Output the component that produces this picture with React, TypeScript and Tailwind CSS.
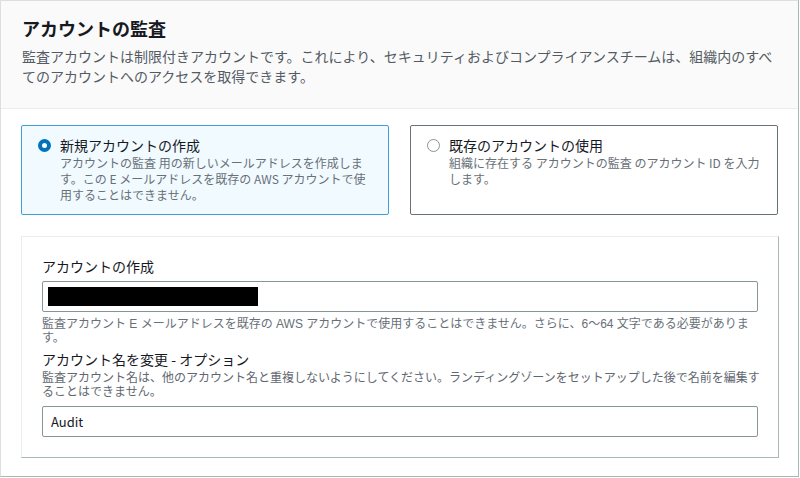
import React from "react";

const font = { fontFamily: '"Noto Sans CJK JP", "Noto Sans", sans-serif' };
const helpFont = { fontFamily: '"Liberation Sans", "Noto Sans CJK JP", sans-serif' };

function RadioCard({
  selected,
  title,
  lines,
}: {
  selected: boolean;
  title: string;
  lines: string[];
}) {
  return (
    <div
      className={
        selected
          ? "w-[368px] h-[90px] border border-[#3f9fd6] bg-[#f1faff] rounded-[2px] pt-[9px] pl-[16px] flex"
          : "w-[368px] h-[90px] border border-[#687078] bg-white rounded-[2px] pt-[9px] pl-[16px] flex"
      }
    >
      <div className="h-[20px] flex items-center">
        {selected ? (
          <span className="block w-[13px] h-[13px] rounded-full border-[4px] border-[#0073bb] bg-white" />
        ) : (
          <span className="block w-[13px] h-[13px] rounded-full border-[1.5px] border-[#879596] bg-white" />
        )}
      </div>
      <div className="ml-[9px]">
        <div className="text-[14px] leading-[20px] text-[#16191f]">{title}</div>
        <div className="text-[12px] leading-[16px] text-[#687078] whitespace-nowrap">
          {lines.map((l, i) => (
            <div key={i}>{l}</div>
          ))}
        </div>
      </div>
    </div>
  );
}

export default function App() {
  return (
    <div className="w-[800px] h-[478px] bg-white" style={font}>
      <div className="w-[799px] h-[477px] border border-[#dcdfe0] border-r-[#aab7b8] border-b-[#aab7b8]">
        <div className="h-[108px] bg-[#fafafa] border-b border-[#eaeded] pl-[21px] pt-[15px]">
          <h2 className="text-[18px] leading-[24px] font-bold text-[#16191f]">
            アカウントの監査
          </h2>
          <p className="mt-[6px] text-[14px] leading-[20px] text-[#545b64] whitespace-nowrap">
            監査アカウントは制限付きアカウントです。これにより、セキュリティおよびコンプライアンスチームは、組織内のすべ
            <br />
            てのアカウントへのアクセスを取得できます。
          </p>
        </div>

        <div className="flex gap-[21px] pl-[20px] mt-[16px]">
          <RadioCard
            selected
            title="新規アカウントの作成"
            lines={[
              "アカウントの監査 用の新しいメールアドレスを作成しま",
              "す。この E メールアドレスを既存の AWS アカウントで使",
              "用することはできません。",
            ]}
          />
          <RadioCard
            selected={false}
            title="既存のアカウントの使用"
            lines={["組織に存在する アカウントの監査 のアカウント ID を入力", "します。"]}
          />
        </div>

        <div className="ml-[20px] mt-[21px] w-[758px] h-[222px] border border-[#eaeded] border-r-[#aab7b8] border-b-[#aab7b8] bg-white px-[20px] pt-[19px]">
          <label className="block text-[14px] leading-[20px] text-[#16191f]">
            アカウントの作成
          </label>
          <div className="mt-[5px] h-[31px] border border-[#879596] rounded-[2px] flex items-center pl-[5px]">
            <div className="w-[210px] h-[19px] bg-black" />
          </div>
          <p
            className="mt-[5px] text-[12px] leading-[14px] text-[#687078] whitespace-nowrap"
            style={helpFont}
          >
            監査アカウント E メールアドレスを既存の AWS アカウントで使用することはできません。さらに、6～64 文字である必要がありま
            <br />
            す。
          </p>
          <label className="block mt-[4px] text-[14px] leading-[20px] text-[#16191f]">
            アカウント名を変更 - オプション
          </label>
          <p
            className="mt-[2px] text-[12px] leading-[14px] text-[#5f6770] whitespace-nowrap"
            style={helpFont}
          >
            監査アカウント名は、他のアカウント名と重複しないようにしてください。ランディングゾーンをセットアップした後で名前を編集す
            <br />
            ることはできません。
          </p>
          <div className="mt-[7px] h-[31px] border border-[#879596] rounded-[2px] flex items-center pl-[8px]">
            <span className="text-[13px] text-[#16191f]">Audit</span>
          </div>
        </div>
      </div>
    </div>
  );
}
